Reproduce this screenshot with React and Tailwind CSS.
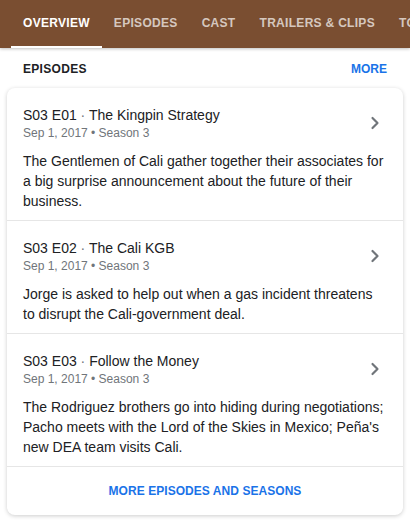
import { ChevronRight } from "lucide-react";

const tabs = ["Overview", "Episodes", "Cast", "Trailers & clips", "Top picks"];

const episodes = [
  {
    code: "S03 E01",
    title: "The Kingpin Strategy",
    meta: "Sep 1, 2017 • Season 3",
    desc: "The Gentlemen of Cali gather together their associates for a big surprise announcement about the future of their business.",
  },
  {
    code: "S03 E02",
    title: "The Cali KGB",
    meta: "Sep 1, 2017 • Season 3",
    desc: "Jorge is asked to help out when a gas incident threatens to disrupt the Cali-government deal.",
  },
  {
    code: "S03 E03",
    title: "Follow the Money",
    meta: "Sep 1, 2017 • Season 3",
    desc: "The Rodriguez brothers go into hiding during negotiations; Pacho meets with the Lord of the Skies in Mexico; Peña's new DEA team visits Cali.",
  },
];

export default function App() {
  return (
    <div
      className="w-[410px] h-[527px] overflow-hidden bg-white"
      style={{ fontFamily: "'Liberation Sans', Arial, sans-serif" }}
    >
      {/* Tabs */}
      <div className="relative z-10 h-12 bg-[#7a4e31] flex pl-[11px] whitespace-nowrap shadow-[0_1px_3px_rgba(0,0,0,0.25)]">
        {tabs.map((t, i) => (
          <div
            key={t}
            className={`relative px-3 flex items-center text-[12px] font-bold uppercase tracking-[0.3px] ${
              i === 0 ? "text-white" : "text-white/70"
            }`}
          >
            <span className="-mt-[2px]">{t}</span>
            {i === 0 && (
              <span className="absolute left-0 right-0 bottom-0 h-[2px] bg-white" />
            )}
          </div>
        ))}
      </div>

      {/* Section header */}
      <div className="flex items-center justify-between pl-[23px] pr-[23px] h-[40px] pt-[2px]">
        <span className="text-[12px] font-bold tracking-[0.3px] text-[#202124]">
          EPISODES
        </span>
        <span className="text-[12px] font-bold text-[#1a73e8]">MORE</span>
      </div>

      {/* Card */}
      <div className="mx-[7px] rounded-lg bg-white shadow-[0_1px_4px_rgba(0,0,0,0.2)]">
        {episodes.map((e) => (
          <div
            key={e.code}
            className="pt-[17px] pb-[9px] pl-[16px] pr-[18px] border-b border-[#e6e6e6]"
          >
            <div className="flex items-center">
              <div className="flex-1">
                <div className="text-[14px] leading-5 text-[#202124]">
                  {e.code}
                  <span className="text-[#70757a]"> · </span>
                  {e.title}
                </div>
                <div className="text-[12px] leading-4 text-[#70757a]">
                  {e.meta}
                </div>
              </div>
              <ChevronRight
                size={20}
                strokeWidth={2.6}
                className="text-[#70757a]"
              />
            </div>
            <p className="mt-[10px] text-[14px] leading-5 text-[#202124]">
              {e.desc}
            </p>
          </div>
        ))}
        <div className="h-[48px] flex items-center justify-center text-[12px] font-bold tracking-[0.05px] text-[#1a73e8]">
          MORE EPISODES AND SEASONS
        </div>
      </div>
    </div>
  );
}
